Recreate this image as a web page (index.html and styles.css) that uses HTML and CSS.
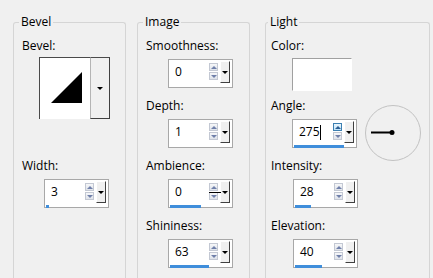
FILE: index.html
```html
<!DOCTYPE html>
<html lang="en">
<head>
    <meta charset="UTF-8">
    <title>Inner Bevel</title>
    <link rel="stylesheet" href="styles.css">
</head>
<body>
    <div class="panel">
        <fieldset class="group group-bevel">
            <legend>Bevel</legend>
            <label class="label">Bevel:</label>
            <div class="bevel-pick">
                <div class="bevel-face">
                    <svg width="50" height="61" viewBox="0 0 50 61">
                        <polygon points="11,45 42,14 42,45" fill="#000"/>
                    </svg>
                </div>
                <div class="bevel-drop"><span class="drop-arrow"></span></div>
            </div>
            <label class="label label-width">Width:</label>
            <div class="spin">
                <div class="spin-row">
                    <span class="spin-value">3</span>
                    <span class="spin-arrows"><span class="spin-up"></span><span class="spin-down"></span></span>
                    <span class="spin-drop"><span class="drop-arrow"></span></span>
                </div>
                <div class="spin-bar" style="width: 3px"></div>
            </div>
        </fieldset>

        <fieldset class="group group-image">
            <legend>Image</legend>
            <label class="label">Smoothness:</label>
            <div class="spin">
                <div class="spin-row">
                    <span class="spin-value">0</span>
                    <span class="spin-arrows"><span class="spin-up"></span><span class="spin-down"></span></span>
                    <span class="spin-drop"><span class="drop-arrow"></span></span>
                </div>
                <div class="spin-bar" style="width: 0px"></div>
            </div>
            <label class="label label-next">Depth:</label>
            <div class="spin">
                <div class="spin-row">
                    <span class="spin-value">1</span>
                    <span class="spin-arrows"><span class="spin-up"></span><span class="spin-down"></span></span>
                    <span class="spin-drop"><span class="drop-arrow"></span></span>
                </div>
                <div class="spin-bar" style="width: 0px"></div>
            </div>
            <label class="label label-next">Ambience:</label>
            <div class="spin">
                <div class="spin-row">
                    <span class="spin-value">0</span>
                    <span class="spin-arrows"><span class="spin-up"></span><span class="spin-down"></span></span>
                    <span class="spin-drop"><span class="drop-arrow"></span></span>
                </div>
                <div class="spin-bar" style="width: 31px"></div>
                <span class="spin-mark"></span>
            </div>
            <label class="label label-next">Shininess:</label>
            <div class="spin">
                <div class="spin-row">
                    <span class="spin-value">63</span>
                    <span class="spin-arrows"><span class="spin-up"></span><span class="spin-down"></span></span>
                    <span class="spin-drop"><span class="drop-arrow"></span></span>
                </div>
                <div class="spin-bar" style="width: 39px"></div>
            </div>
        </fieldset>

        <fieldset class="group group-light">
            <legend>Light</legend>
            <label class="label">Color:</label>
            <div class="swatch"></div>
            <label class="label label-angle">Angle:</label>
            <div class="angle-row">
                <div class="spin">
                    <div class="spin-row">
                        <span class="spin-value">275<span class="caret"></span></span>
                        <span class="spin-arrows"><span class="spin-up hot"></span><span class="spin-down"></span></span>
                        <span class="spin-drop"><span class="drop-arrow"></span></span>
                    </div>
                    <div class="spin-bar" style="width: 50px"></div>
                </div>
                <svg class="dial" width="56" height="56" viewBox="0 0 56 56">
                    <circle cx="28" cy="28" r="27.5" fill="none" stroke="#c2c2c2"/>
                    <line x1="6" y1="27.5" x2="27" y2="27.5" stroke="#000" stroke-width="2"/>
                    <circle cx="27" cy="27.5" r="2.5" fill="#000"/>
                </svg>
            </div>
            <label class="label label-next">Intensity:</label>
            <div class="spin">
                <div class="spin-row">
                    <span class="spin-value">28</span>
                    <span class="spin-arrows"><span class="spin-up"></span><span class="spin-down"></span></span>
                    <span class="spin-drop"><span class="drop-arrow"></span></span>
                </div>
                <div class="spin-bar" style="width: 16px"></div>
            </div>
            <label class="label label-next">Elevation:</label>
            <div class="spin">
                <div class="spin-row">
                    <span class="spin-value">40</span>
                    <span class="spin-arrows"><span class="spin-up"></span><span class="spin-down"></span></span>
                    <span class="spin-drop"><span class="drop-arrow"></span></span>
                </div>
                <div class="spin-bar" style="width: 27px"></div>
            </div>
        </fieldset>
    </div>
</body>
</html>
```

FILE: styles.css
```css
body {
    margin: 0;
    height: 278px;
    overflow: hidden;
    background-color: #f0f0f0;
    font-family: "Open Sans", Arial, sans-serif;
    font-size: 12px;
    color: #000;
}
.panel {
    display: flex;
    align-items: flex-start;
    padding: 14px 0 0 13px;
}
.group {
    margin: 0;
    min-width: 0;
    height: 266px;
    box-sizing: border-box;
    padding: 8px 0 0 8px;
    border: 1px solid #d5d5d5;
    border-bottom: 0;
    border-radius: 3px 3px 0 0;
}
.group legend {
    padding: 0 2px;
    margin-left: -3px;
    line-height: 16px;
}
.group-bevel { width: 113px; margin-right: 11px; }
.group-image { width: 113px; margin-right: 15px; }
.group-light { width: 165px; padding-left: 5px; }

.label {
    display: block;
    line-height: 16px;
}
.label-next { margin-top: 10px; }
.label-width { margin-top: 39px; }
.label-angle { margin-top: 7px; }

/* bevel shape picker */
.bevel-pick {
    display: flex;
    width: 71px;
    height: 62px;
    margin: 3px 0 0 17px;
}
.bevel-face {
    width: 51px;
    box-sizing: border-box;
    background-color: #fff;
    border-top: 1px solid #4a4a4a;
    border-left: 1px solid #4a4a4a;
}
.bevel-face svg { display: block; }
.bevel-drop {
    width: 20px;
    display: flex;
    align-items: center;
    justify-content: center;
    box-sizing: border-box;
    border-top: 1px solid #4a4a4a;
    border-left: 1px solid #b4b4b4;
    border-right: 1px solid #404040;
    border-bottom: 1px solid #404040;
}
.drop-arrow {
    width: 0;
    height: 0;
    border-left: 3px solid transparent;
    border-right: 3px solid transparent;
    border-top: 3px solid #000;
}

/* numeric spin box */
.spin {
    position: relative;
    width: 65px;
    height: 29px;
    box-sizing: border-box;
    margin: 5px 0 0 22px;
    background-color: #fff;
    border: 1px solid #a8a8a8;
}
.spin-row {
    display: flex;
    align-items: flex-start;
    height: 24px;
}
.spin-value {
    width: 34px;
    padding-left: 6px;
    line-height: 24px;
    display: flex;
    align-items: center;
}
.caret {
    display: inline-block;
    width: 1px;
    height: 15px;
    background-color: #000;
}
.spin-arrows {
    display: flex;
    flex-direction: column;
    width: 9px;
    margin-top: 3px;
}
.spin-up, .spin-down {
    display: flex;
    align-items: center;
    justify-content: center;
    height: 8px;
    box-sizing: border-box;
    border: 1px solid #c3c8d3;
    background: linear-gradient(#f6f7f9, #dfe3ea);
}
.spin-up { margin-bottom: 1px; }
.spin-up::after, .spin-down::after {
    content: "";
    width: 0;
    height: 0;
    border-left: 3px solid transparent;
    border-right: 3px solid transparent;
}
.spin-up::after { border-bottom: 3px solid #7080aa; }
.spin-down::after { border-top: 3px solid #7080aa; }
.spin-up.hot {
    border-color: #3c7fb1;
    background: linear-gradient(#eaf6fd, #bfe3f9);
}
.spin-up.hot::after { border-bottom-color: #2a5d92; }
.spin-drop {
    display: flex;
    align-items: center;
    justify-content: center;
    width: 10px;
    height: 22px;
    margin: 1px 0 0 2px;
    box-sizing: border-box;
    background-color: #f0f0f0;
    border-top: 1px solid #fff;
    border-left: 1px solid #fff;
    border-right: 1px solid #404040;
    border-bottom: 1px solid #404040;
}
.spin-bar {
    height: 3px;
    margin: 1px 0 0 1px;
    background-color: #3f8edb;
}
.spin-mark {
    position: absolute;
    left: 40px;
    top: 12px;
    width: 12px;
    height: 1px;
    background-color: #000;
}

/* light colour and angle */
.swatch {
    width: 60px;
    height: 33px;
    box-sizing: border-box;
    margin: 4px 0 0 21px;
    background-color: #fff;
    border-top: 1px solid #a0a0a0;
    border-left: 1px solid #a0a0a0;
    border-right: 1px solid #fff;
    border-bottom: 1px solid #fff;
}
.angle-row {
    display: flex;
    align-items: center;
    margin: 5px 0 0 21px;
}
.angle-row .spin { margin: 0; }
.dial {
    display: block;
    margin: -14px 0 -13px 8px;
}
```
